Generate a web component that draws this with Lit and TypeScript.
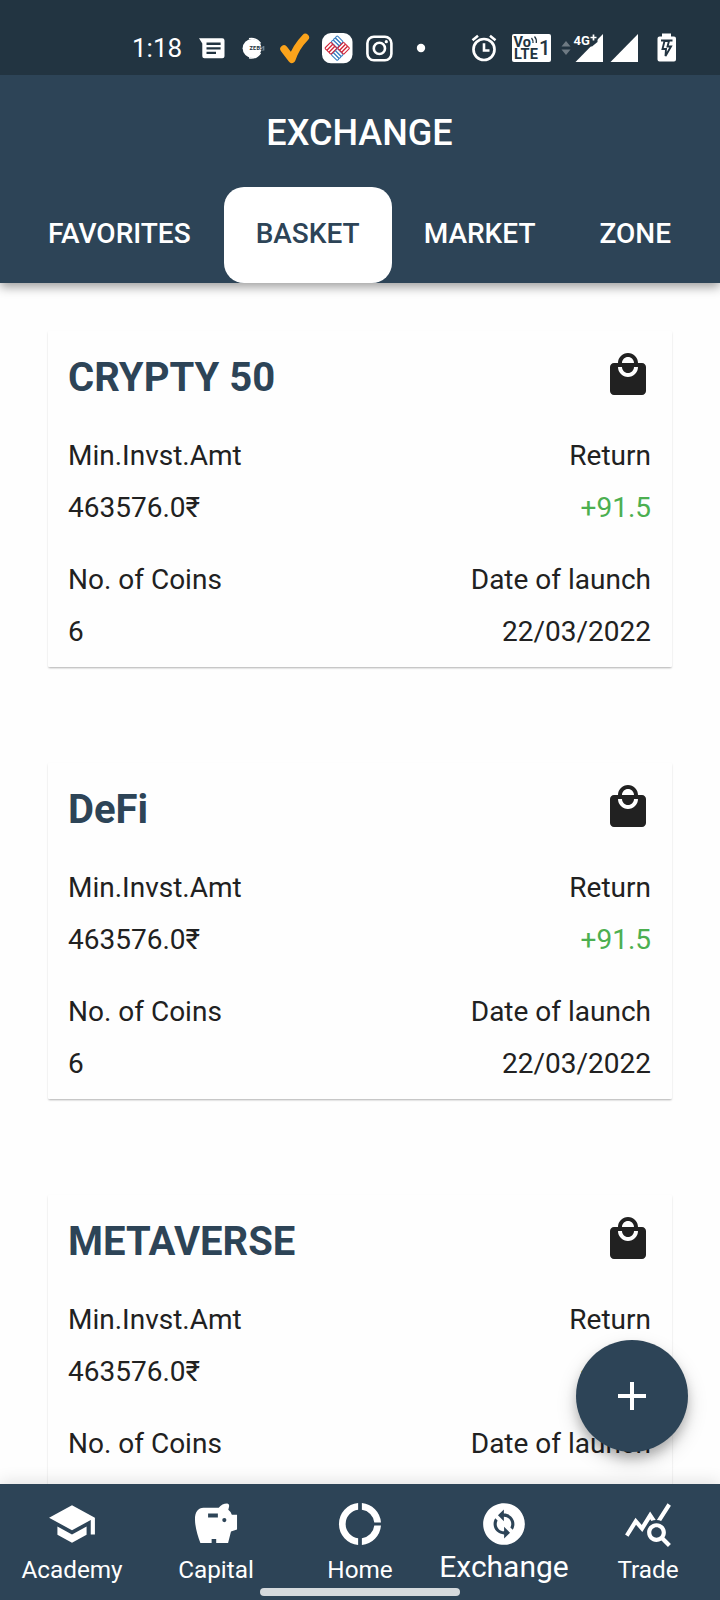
import { LitElement, html, svg, css } from "lit";
import { customElement, property } from "lit/decorators.js";

@customElement("status-bar")
class StatusBar extends LitElement {
  static styles = css`
    :host { display: flex; align-items: center; height: 75px; padding: 0 36px 0 132px; box-sizing: border-box; background: #223441; color: #fff; }
    .time { width: 58px; padding-top: 21px; font-size: 26px; line-height: 30px; white-space: nowrap; }
    svg { display: block; height: 75px; flex: none; }
    .volte { font: 700 14.5px/1 Roboto, sans-serif; fill: #223441; }
    .one { font: 500 20px/1 Roboto, sans-serif; fill: #223441; }
    .net { font: 700 13px/1 Roboto, sans-serif; fill: #fff; }
    .mini { font: 700 5.5px/1 Roboto, sans-serif; fill: #223441; }
  `;

  glyph(from: number, to: number, art: unknown) {
    return html`<svg width=${to - from} height="75" viewBox="${from} 0 ${to - from} 75" fill="#fff">${art}</svg>`;
  }

  render() {
    return html`
      <div class="time">1:18</div>
      ${this.glyph(190, 232, svg`<path fill-rule="evenodd" d="M199 38.3H222.3Q224.5 38.3 224.5 40.5V56.3Q224.5 58.3 222.3 58.3H204.500Q202.300 58.3 202.300 56.3V43.500ZM206.500 42.600V44.900H220.600V42.600ZM206.500 47.200V49.500H220.600V47.200ZM206.500 51.800V54.100H216V51.800Z"/>`)}
      ${this.glyph(232, 272, svg`<circle cx="252" cy="48.300" r="9.400"/><path d="M249 38.700Q256.500 37.500 260.500 43.500M249 57.800Q256.500 59 260.500 53" fill="none" stroke="#fff" stroke-width="1.400"/><path d="M260 46H264.300V50.500H260Z" opacity=".45"/><text class="mini" x="249.500" y="50.300" textLength="14">ZEBS</text>`)}
      ${this.glyph(272, 316, svg`<path d="M284 49L291.800 59.300Q296 47 305.300 37.500" fill="none" stroke="#fba31b" stroke-width="7.500" stroke-linecap="round" stroke-linejoin="round"/>`)}
      ${this.glyph(316, 358, svg`<rect x="322" y="33" width="30.500" height="30.300" rx="9"/>
        <g fill="none" stroke-width="1.100" transform="translate(337.200 48.200) rotate(45)">
          <g stroke="#3d82c4">
            <rect x="-8.800" y="-8.800" width="8.600" height="2.900" rx="1"/><rect x="-8.800" y="-5.900" width="8.600" height="2.900" rx="1"/><rect x="-8.800" y="-3" width="8.600" height="2.900" rx="1"/>
            <rect x=".2" y=".1" width="8.600" height="2.900" rx="1"/><rect x=".2" y="3" width="8.600" height="2.900" rx="1"/><rect x=".2" y="5.900" width="8.600" height="2.900" rx="1"/>
          </g>
          <g stroke="#d3263a">
            <rect x=".2" y="-8.800" width="2.900" height="8.600" rx="1"/><rect x="3.100" y="-8.800" width="2.900" height="8.600" rx="1"/><rect x="6" y="-8.800" width="2.900" height="8.600" rx="1"/>
            <rect x="-8.800" y=".2" width="2.900" height="8.600" rx="1"/><rect x="-5.900" y=".2" width="2.900" height="8.600" rx="1"/><rect x="-3" y=".2" width="2.900" height="8.600" rx="1"/>
          </g>
        </g>`)}
      ${this.glyph(358, 404, svg`<rect x="367.400" y="36.700" width="24" height="23.500" rx="6.500" fill="none" stroke="#fff" stroke-width="2.600"/><circle cx="379.400" cy="48.400" r="5.600" fill="none" stroke="#fff" stroke-width="2.600"/><circle cx="386.300" cy="41.700" r="1.600"/>`)}
      ${this.glyph(404, 460, svg`<circle cx="421" cy="48" r="4.200"/>`)}
      ${this.glyph(460, 504, svg`<circle cx="484" cy="49.500" r="10.500" fill="none" stroke="#fff" stroke-width="2.700"/><path d="M484 43.200V50.500H489.500M472.500 40.200L478 35.800M495.500 40.200L490 35.800" fill="none" stroke="#fff" stroke-width="2.600"/>`)}
      ${this.glyph(504, 556, svg`<rect x="512" y="34" width="39" height="28" rx="2"/><text class="volte" x="513.500" y="46.500" textLength="17.500">Vo</text><path d="M531.500 38Q533.300 40 533 43M534.500 36.500Q536.800 39 536.300 43" fill="none" stroke="#223441" stroke-width="1.300"/><text class="volte" x="514" y="59" textLength="24">LTE</text><text class="one" x="539" y="55">1</text>`)}
      ${this.glyph(556, 606, svg`<path d="M561.500 46.500L566 41L570.500 46.500ZM561.500 49.500H570.500L566 55Z" fill="#6e7a83"/><path d="M603 34V62H575.500Z"/><path d="M589 34H597.500V42L592 46.500L588 46Z" fill="#223441"/><text class="net" x="573.500" y="44.800">4G</text><path d="M590.500 37.500H596.500M593.500 34.500V40.500" stroke="#fff" stroke-width="1.700"/>`)}
      ${this.glyph(606, 648, svg`<path d="M638 34V62H610.500Z"/>`)}
      ${this.glyph(648, 684, svg`<path d="M662 33.500H671V36.500H674Q676 36.500 676 38.500V59.500Q676 61.500 674 61.500H659.500Q657.500 61.500 657.500 59.500V38.500Q657.500 36.500 659.500 36.500H662Z"/><path d="M661 40.500H672.500M664.500 41L662.500 49H666L665.500 56L671 46.500H667.500L669 41Z" fill="none" stroke="#223441" stroke-width="1.900"/>`)}
    `;
  }
}

@customElement("basket-card")
class BasketCard extends LitElement {
  @property() name = "";
  static styles = css`
    :host { display: block; height: 336px; box-sizing: border-box; padding: 20px; background: #fefefe; color: #212121; border-radius: 1px; box-shadow: 0 2px 2px -1px rgba(0,0,0,.2), 0 1px 2px rgba(0,0,0,.13); }
    .head { display: flex; align-items: center; justify-content: space-between; height: 48px; margin-bottom: 41px; }
    h2 { margin: 0; padding-top: 6px; font-size: 40px; line-height: 48px; font-weight: 700; color: #2d4457; }
    svg { width: 48px; height: 48px; display: block; }
    .row { display: flex; justify-content: space-between; padding-right: 1px; font-size: 28px; line-height: 32px; margin-bottom: 20px; }
    .value { margin-bottom: 40px; }
    .gain { color: #4caf50; }
  `;
  render() {
    return html`
      <div class="head">
        <h2>${this.name}</h2>
        <svg viewBox="0 0 24 24" fill="#212121"><path d="M19 6h-2c0-2.760-2.240-5-5-5S7 3.240 7 6H5c-1.100 0-2 .9-2 2v12c0 1.100.9 2 2 2h14c1.100 0 2-.9 2-2V8c0-1.100-.9-2-2-2zm-7-3c1.660 0 3 1.340 3 3H9c0-1.660 1.340-3 3-3zm0 10c-2.760 0-5-2.240-5-5h2c0 1.660 1.340 3 3 3s3-1.340 3-3h2c0 2.760-2.240 5-5 5z"/></svg>
      </div>
      <div class="row"><span>Min.Invst.Amt</span><span>Return</span></div>
      <div class="row value"><span>463576.0₹</span><span class="gain">+91.5</span></div>
      <div class="row"><span>No. of Coins</span><span>Date of launch</span></div>
      <div class="row"><span>6</span><span>22/03/2022</span></div>
    `;
  }
}

const NAV = [
  { label: "Academy", d: "M5 13.180v4L12 21l7-3.820v-4L12 17l-7-3.820zM12 3L1 9l11 6 9-4.910V17h2V9L12 3z" },
  { label: "Capital", d: "M6 4.200H13.300C14.300 2.800 15.800 2.100 17.300 2.100C18.200 2.100 18.500 3 18.200 3.900L17.900 5.200Q19 6 19.600 7.500H22.100V14.600L19.200 15.600L17.800 21.100H12.100V19.200H9.900V21.100H4.500C3.200 17.500 1.900 13.500 1.900 9.600C1.900 6.200 3.500 4.200 6 4.200ZM8.200 6.900V8.900H12.900V6.900ZM16 9.100A1 1 0 1 0 16 11.100A1 1 0 1 0 16 9.100Z" },
  { label: "Home", d: "M11.100 1.940A10.100 10.100 0 0 0 11.100 22.060V18.840A6.900 6.900 0 0 1 11.100 5.160ZM12.900 1.940A10.100 10.100 0 0 1 22.070 11.250H18.860A6.900 6.900 0 0 0 12.900 5.160ZM12.900 22.060A10.100 10.100 0 0 0 22.070 12.750H18.860A6.900 6.900 0 0 1 12.900 18.840Z" },
  { label: "Exchange", active: true, d: "M12 2C6.480 2 2 6.480 2 12s4.480 10 10 10 10-4.480 10-10S17.520 2 12 2zm.06 17v-2.010H12c-1.280 0-2.560-.49-3.540-1.460-1.710-1.710-1.920-4.350-.64-6.290l1.100 1.100c-.71 1.330-.53 3.010.59 4.130.7.7 1.620 1.030 2.540 1.010v-2.140l2.830 2.830L12.060 19zm4.110-4.240l-1.100-1.100c.71-1.330.53-3.010-.59-4.130C13.790 8.840 12.900 8.500 12 8.500h-.06v2.150L9.110 7.830 11.940 5v2.020c1.300-.02 2.610.45 3.600 1.450 1.700 1.700 1.910 4.350.63 6.290z" },
  { label: "Trade", d: "M19.880 18.470c.44-.7.7-1.510.7-2.390 0-2.490-2.010-4.500-4.500-4.500s-4.500 2.010-4.500 4.500 2.010 4.500 4.490 4.500c.88 0 1.700-.26 2.390-.7L21.580 23 23 21.580l-3.120-3.110zm-3.800.11c-1.380 0-2.500-1.120-2.500-2.500s1.120-2.500 2.500-2.500 2.500 1.120 2.500 2.500-1.120 2.500-2.500 2.500zm-.36-8.500c-.74.02-1.450.18-2.100.45l-.55-.83-3.800 6.180-3.010-3.520-3.630 5.810L1 17l5-8 3 3.500L13 6l2.720 4.080zm2.590.5c-.64-.28-1.330-.45-2.050-.49L21.380 2 23 3.180l-4.690 7.400z" },
];

@customElement("nav-bar")
class NavBar extends LitElement {
  static styles = css`
    :host { display: grid; grid-template-columns: repeat(5, 1fr); height: 116px; background: #2d4457; color: #fff; box-shadow: 0 -2px 16px rgba(0,0,0,.12); position: relative; }
    .item { display: flex; flex-direction: column; align-items: center; padding-top: 15px; }
    svg { width: 50px; height: 50px; display: block; fill: #fff; }
    .label { margin-top: 7px; font-size: 24.300px; line-height: 28px; white-space: nowrap; }
    .active { margin-top: 1px; font-size: 30px; line-height: 34px; }
    .handle { position: absolute; left: 260px; bottom: 4px; width: 200px; height: 8px; border-radius: 4px; background: #d5dadd; }
  `;
  render() {
    return html`
      ${NAV.map((n) => html`<div class="item">
        <svg viewBox="0 0 24 24"><path fill-rule="evenodd" d=${n.d} /></svg>
        <span class="label ${n.active ? "active" : ""}">${n.label}</span>
      </div>`)}
      <div class="handle"></div>
    `;
  }
}

@customElement("app-root")
class AppRoot extends LitElement {
  static styles = css`
    :host { display: flex; flex-direction: column; position: relative; width: 720px; height: 1600px; overflow: hidden; background: #fefefe; font-family: Roboto, "Noto Sans", sans-serif; }
    header { flex: none; height: 283px; background: #2d4457; color: #fff; box-shadow: 0 4px 10px rgba(0,0,0,.38); position: relative; }
    h1 { margin: 0; height: 112px; line-height: 116px; padding-right: 1px; font-size: 36px; font-weight: 500; text-align: center; }
    .tabs { display: flex; height: 96px; justify-content: center; }
    .tab { padding: 0 32px; border-radius: 20px; font-size: 28px; line-height: 94px; font-weight: 500; }
    .tab:first-child { padding: 0 33px 0 31px; }
    .on { background: #fff; color: #2d4457; }
    main { flex: 1; min-height: 0; overflow: hidden; padding: 48px 48px 0; display: flex; flex-direction: column; gap: 96px; }
    basket-card { flex: none; }
    nav-bar { flex: none; }
    .fab { position: absolute; right: 32px; bottom: 148px; width: 112px; height: 112px; border-radius: 50%; background: #2d4457; display: grid; place-items: center; box-shadow: 0 7px 11px -1px rgba(0,0,0,.22), 0 9px 20px rgba(0,0,0,.17); }
    .fab svg { width: 48px; height: 48px; }
  `;
  render() {
    return html`
      <header>
        <status-bar></status-bar>
        <h1>EXCHANGE</h1>
        <div class="tabs">
          ${["FAVORITES", "BASKET", "MARKET", "ZONE"].map((t) => html`<div class="tab ${t === "BASKET" ? "on" : ""}">${t}</div>`)}
        </div>
      </header>
      <main>
        ${["CRYPTY 50", "DeFi", "METAVERSE"].map((n) => html`<basket-card name=${n}></basket-card>`)}
      </main>
      <nav-bar></nav-bar>
      <div class="fab"><svg viewBox="0 0 24 24" fill="#fff"><path d="M19 13h-6v6h-2v-6H5v-2h6V5h2v6h6v2z" /></svg></div>
    `;
  }
}
